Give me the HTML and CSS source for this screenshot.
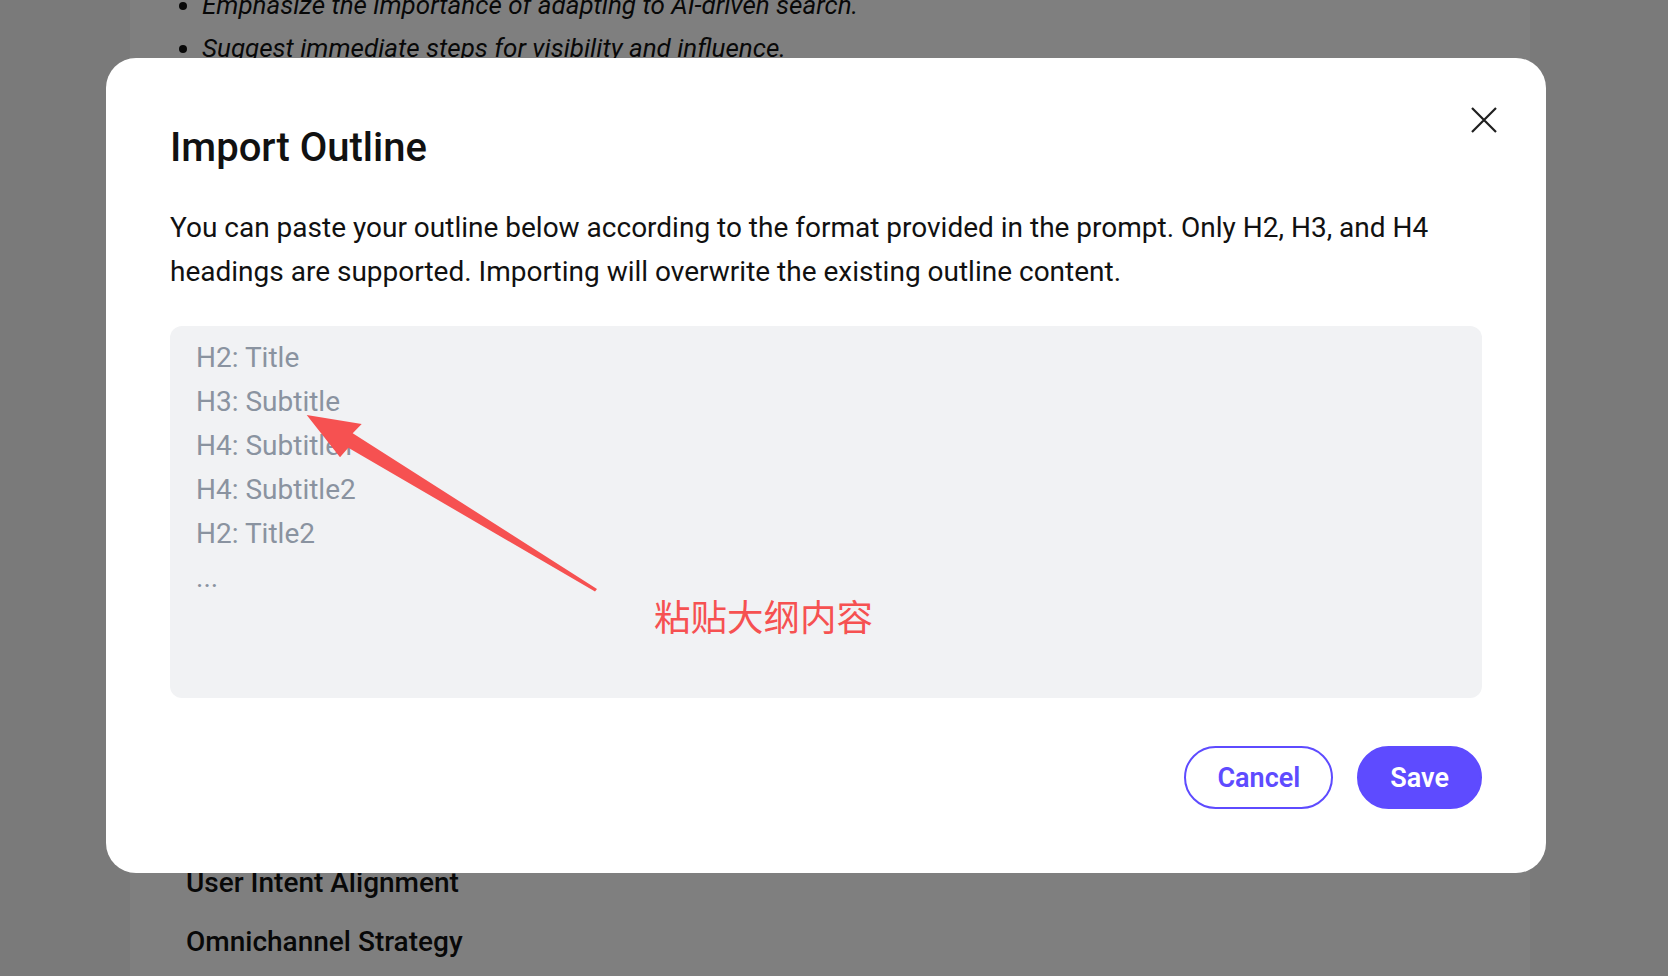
FILE: index.html
```html
<!DOCTYPE html>
<html lang="en">
<head>
    <meta charset="UTF-8">
    <meta name="viewport" content="width=device-width, initial-scale=1.0">
    <title>Import Outline</title>
    <link rel="stylesheet" href="styles.css">
</head>
<body>
    <div class="page">
        <ul class="goals">
            <li>Emphasize the importance of adapting to AI-driven search.</li>
            <li>Suggest immediate steps for visibility and influence.</li>
        </ul>
        <div class="hidden-part"></div>
        <h3 class="section">User Intent Alignment</h3>
        <h3 class="section">Omnichannel Strategy</h3>
    </div>

    <div class="overlay">
        <div class="modal">
            <button class="close" aria-label="Close">
                <svg width="26" height="26" viewBox="0 0 26 26">
                    <path d="M1 1 L25 25 M25 1 L1 25" stroke="#1f1f1f" stroke-width="2.2" fill="none"/>
                </svg>
            </button>
            <h2 class="modal-title">Import Outline</h2>
            <p class="modal-text">You can paste your outline below according to the format provided in the prompt. Only H2, H3, and H4 headings are supported. Importing will overwrite the existing outline content.</p>
            <div class="paste-box">
                <textarea class="outline-input" placeholder="H2: Title&#10;H3: Subtitle&#10;H4: Subtitle1&#10;H4: Subtitle2&#10;H2: Title2&#10;..."></textarea>
                <!-- annotation on top of the screenshot -->
                <svg class="hint-arrow" width="440" height="280" viewBox="0 0 440 280">
                    <polygon points="136.7,89 191.7,98 182.7,107.3 427,263 425,265.5 178.3,121.7 170,131.3" fill="#f65151"/>
                </svg>
                <span class="hint-text">粘贴大纲内容</span>
            </div>
            <div class="actions">
                <button class="btn btn-outline">Cancel</button>
                <button class="btn btn-primary">Save</button>
            </div>
        </div>
    </div>
</body>
</html>
```

FILE: styles.css
```css
body {
    margin: 0;
    background: #f5f5f5;
    font-family: Roboto, "Liberation Sans", sans-serif;
    color: #111;
    height: 976px;
    overflow: hidden;
}

.page {
    width: 1400px;
    margin-left: 130px;
    padding: 0 56px;
    box-sizing: border-box;
    background: #fff;
    height: 976px;
    display: flex;
    flex-direction: column;
}

.goals {
    margin: -16px 0 0;
    padding-left: 16px;
    font-size: 26px;
    font-style: italic;
    line-height: 43px;
}

.hidden-part {
    height: 793px;
    flex-shrink: 0;
}

.section {
    margin: 0 0 19px;
    font-size: 28px;
    font-weight: 500;
    line-height: 40px;
}

.overlay {
    position: fixed;
    inset: 0;
    background: rgba(0, 0, 0, 0.5);
    display: flex;
    justify-content: center;
    align-items: flex-start;
    padding: 58px 16px 0 0;
}

.modal {
    position: relative;
    width: 1440px;
    box-sizing: border-box;
    padding: 64px;
    background: #fff;
    border-radius: 30px;
}

.close {
    position: absolute;
    top: 42px;
    right: 42px;
    width: 40px;
    height: 40px;
    padding: 0;
    border: none;
    background: none;
    display: flex;
    align-items: center;
    justify-content: center;
    cursor: pointer;
}

.modal-title {
    margin: 2px 0 0;
    font-size: 40px;
    font-weight: 500;
    line-height: 48px;
    color: #111;
}

.modal-text {
    margin: 34px 0 0;
    font-size: 28px;
    line-height: 44px;
    color: #111;
}

.paste-box {
    position: relative;
    margin-top: 32px;
}

.outline-input {
    display: block;
    width: 100%;
    height: 372px;
    box-sizing: border-box;
    padding: 10px 26px;
    border: none;
    border-radius: 12px;
    background: #f1f2f4;
    font-family: Roboto, "Liberation Sans", sans-serif;
    font-size: 28px;
    line-height: 44px;
    resize: none;
    outline: none;
}

.outline-input::placeholder {
    color: #8a93a0;
}

.hint-arrow {
    position: absolute;
    left: 0;
    top: 0;
    pointer-events: none;
}

.hint-text {
    position: absolute;
    left: 484px;
    top: 271px;
    font-family: "Noto Sans CJK SC", sans-serif;
    font-size: 36.5px;
    line-height: 37px;
    color: #f65151;
    pointer-events: none;
}

.actions {
    display: flex;
    justify-content: flex-end;
    gap: 24px;
    margin-top: 48px;
}

.btn {
    height: 63px;
    padding: 0 31px;
    border-radius: 32px;
    border: 2px solid #5e4bff;
    font-family: Roboto, "Liberation Sans", sans-serif;
    font-size: 27px;
    font-weight: 600;
    cursor: pointer;
}

.btn-outline {
    background: #fff;
    color: #5e4bff;
}

.btn-primary {
    background: #5e4bff;
    color: #fff;
}
```
